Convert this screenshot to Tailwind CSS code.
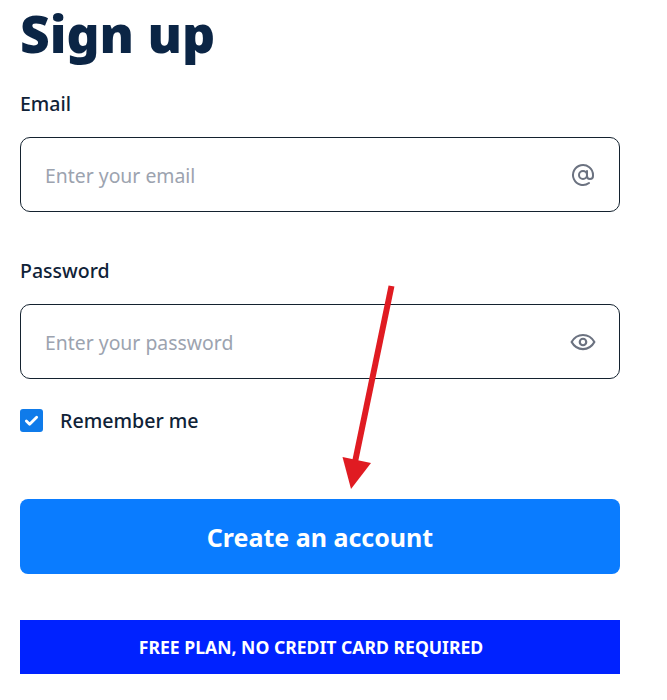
<!DOCTYPE html>
<html lang="en">
<head>
    <meta charset="UTF-8">
    <title>Sign up</title>
    <script src="https://cdn.jsdelivr.net/npm/@tailwindcss/browser@4"></script>
</head>
<body class="bg-white font-['Noto_Sans',sans-serif]">
    <div class="relative w-[667px] h-[700px] overflow-hidden pl-5">
        <div class="w-[600px]">
            <h1 class="h-[62px] text-[51.500px] leading-[66px] font-black text-[#0b2545]">Sign up</h1>

            <label class="block mt-[29px] h-[26px] text-[19.500px] leading-[26px] font-medium text-[#0f2237]">Email</label>
            <div class="mt-[20px] h-[75px] border border-[#14222f] rounded-[10px] flex items-center justify-between pl-[24px] pr-[24px]">
                <span class="pt-[2px] text-[19.400px] text-[#9ca3af]">Enter your email</span>
                <svg class="w-[24px] h-[24px]" viewBox="0 0 24 24" fill="none" stroke="#6b7280" stroke-width="2" stroke-linecap="round" stroke-linejoin="round">
                    <circle cx="12" cy="12" r="4"/>
                    <path d="M16 8v5a3 3 0 0 0 6 0v-1a10 10 0 1 0-4 8"/>
                </svg>
            </div>

            <label class="block mt-[46px] h-[26px] text-[19.500px] leading-[26px] font-medium text-[#0f2237]">Password</label>
            <div class="mt-[20px] h-[75px] border border-[#14222f] rounded-[10px] flex items-center justify-between pl-[24px] pr-[23px]">
                <span class="pt-[2px] text-[19.400px] text-[#9ca3af]">Enter your password</span>
                <svg class="w-[26px] h-[26px]" viewBox="0 0 24 24" fill="none" stroke="#6b7280" stroke-width="2" stroke-linecap="round" stroke-linejoin="round">
                    <path d="M1.500 12C4 7.500 7.500 5.500 12 5.500s8 2 10.500 6.500c-2.500 4.500-6 6.500-10.500 6.500S4 16.500 1.500 12z"/>
                    <circle cx="12" cy="12" r="3"/>
                </svg>
            </div>

            <div class="mt-[30px] h-[22px] flex items-center gap-[17px]">
                <span class="w-[23px] h-[23px] rounded-[3px] bg-[#0f7bea] flex items-center justify-center">
                    <svg class="w-[15px] h-[15px]" viewBox="0 0 16 16" fill="none" stroke="#fff" stroke-width="3" stroke-linecap="round" stroke-linejoin="round">
                        <path d="M2.500 8.500l3.500 3.500 7.500-7.500"/>
                    </svg>
                </span>
                <span class="pt-[1px] text-[19.600px] font-medium text-[#0f2237]">Remember me</span>
            </div>

            <button class="block mt-[68px] w-full h-[75px] pt-[2px] rounded-[8px] bg-[#0a7cff] text-white text-[25px] font-bold">Create an account</button>

            <div class="mt-[46px] h-[54px] pr-[18px] bg-[#0022ff] flex items-center justify-center text-white text-[17.600px] font-bold">FREE PLAN, NO CREDIT CARD REQUIRED</div>
        </div>

        <svg class="absolute left-0 top-0 w-[667px] h-[700px] pointer-events-none" viewBox="0 0 667 700">
            <path d="M391.500 286L355 462" stroke="#e01b22" stroke-width="6" fill="none"/>
            <path d="M342.500 457L371 463L351 489z" fill="#e01b22"/>
        </svg>
    </div>
</body>
</html>
